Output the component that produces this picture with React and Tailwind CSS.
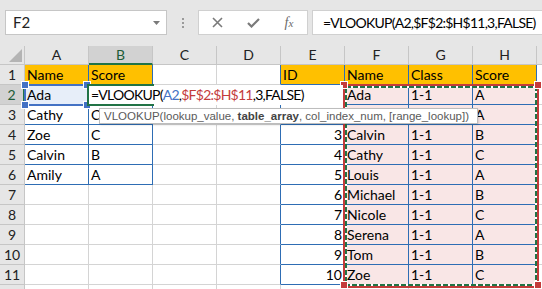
import React from "react";

const COLS = ["A", "B", "C", "D", "E", "F", "G", "H"];

const CELLS = {
  A1: "Name", B1: "Score",
  A2: "Ada",
  A3: "Cathy", B3: "C",
  A4: "Zoe", B4: "C",
  A5: "Calvin", B5: "B",
  A6: "Amily", B6: "A",
  E1: "ID", F1: "Name", G1: "Class", H1: "Score",
  F2: "Ada", G2: "1-1", H2: "A", H3: "A",
};

const NAMES = ["Calvin", "Cathy", "Louis", "Michael", "Nicole", "Serena", "Tom", "Zoe"];
const SCORES = ["B", "C", "A", "B", "C", "A", "B", "C"];
NAMES.forEach((name, i) => {
  const r = i + 4;
  CELLS["E" + r] = String(i + 3);
  CELLS["F" + r] = name;
  CELLS["G" + r] = "1-1";
  CELLS["H" + r] = SCORES[i];
});

const inTableA = (c, r) => (c === "A" || c === "B") && r >= 1 && r <= 6;
const inTableE = (c, r) => ["E", "F", "G", "H"].includes(c) && r >= 1 && r <= 11;

function cellClass(c, r) {
  const table = inTableA(c, r) || inTableE(c, r);
  let cls = "border-r border-b box-border overflow-hidden whitespace-nowrap px-[2px] leading-[19px] ";
  if (table) cls += "border-[#2e6db4] ";
  else if (c === "D" && r <= 11) cls += "border-r-[#2e6db4] border-b-[#d4d4d4] ";
  else cls += "border-[#d4d4d4] ";
  if (table && r === 1) cls += "bg-[#ffc000] ";
  else if (c === "A" && r === 2) cls += "bg-[#e7eef9] ";
  else if (["F", "G", "H"].includes(c) && r >= 2 && r <= 11) cls += "bg-[#f9e6e6] ";
  else cls += "bg-white ";
  if (c === "E" && r > 1) cls += "text-right ";
  return cls;
}

function TopBar() {
  return (
    <div className="h-[46px] bg-[#e6e6e6] flex items-start pt-[10px] pl-[5px]">
      <div className="shrink-0 w-[162px] h-[25px] bg-white border border-[#c6c6c6] flex items-center justify-between pl-[7px] pr-[6px]">
        <span className="text-[15px] text-[#222]">F2</span>
        <svg width="7" height="4" viewBox="0 0 7 4">
          <polygon points="0,0 7,0 3.5,4" fill="#7a7a7a" />
        </svg>
      </div>
      <div className="shrink-0 w-[31px] h-[25px] flex flex-col items-center justify-center gap-[2px]">
        <div className="w-[2px] h-[2px] bg-[#9a9a9a]" />
        <div className="w-[2px] h-[2px] bg-[#9a9a9a]" />
        <div className="w-[2px] h-[2px] bg-[#9a9a9a]" />
      </div>
      <div className="shrink-0 w-[110px] h-[25px] bg-white border border-[#d0d0d0] flex items-center">
        <div className="w-[36px] flex justify-center">
          <svg width="11" height="11" viewBox="0 0 11 11">
            <path d="M1 1 L10 10 M10 1 L1 10" stroke="#7a7a7a" strokeWidth="1.6" />
          </svg>
        </div>
        <div className="w-[36px] flex justify-center">
          <svg width="13" height="10" viewBox="0 0 13 10">
            <path d="M1 5 L4.5 8.5 L12 1" stroke="#7a7a7a" strokeWidth="2.2" fill="none" />
          </svg>
        </div>
        <div className="w-[36px] flex justify-center">
          <span className="italic text-[14px] text-[#6a6a6a]" style={{ fontFamily: '"Liberation Serif", serif' }}>
            f<span className="text-[11px]">x</span>
          </span>
        </div>
      </div>
      <div className="ml-[4px] flex-1 min-w-0 -mr-px h-[25px] bg-white border border-[#d0d0d0] flex items-center pl-[10px] overflow-hidden">
        <span className="text-[14px] tracking-[-0.75px] text-black whitespace-nowrap">=VLOOKUP(A2,$F$2:$H$11,3,FALSE)</span>
      </div>
    </div>
  );
}

function Handle({ className }) {
  return <div className={"absolute w-[6px] h-[6px] border border-white box-content " + className} />;
}

export default function App() {
  const rows = Array.from({ length: 12 }, (_, i) => i + 1);
  return (
    <div className="w-[542px] h-[289px] overflow-hidden bg-white text-[14px] text-black" style={{ fontFamily: "Lato, Carlito, sans-serif" }}>
      <TopBar />
      <div className="relative">
        <div className="grid grid-cols-[25px_repeat(8,64px)_1fr] grid-rows-[19px_repeat(12,20px)]">
          <div className="bg-[#e6e6e6] border-r border-b border-[#c6c6c6] flex items-end justify-end pr-[2px] pb-[2px]">
            <svg width="13" height="13" viewBox="0 0 13 13">
              <polygon points="13,0 13,13 0,13" fill="#b4b4b4" />
            </svg>
          </div>
          {COLS.map((c) => (
            <div
              key={c}
              className={
                c === "B"
                  ? "bg-[#d2d2d2] border-r border-[#c6c6c6] border-b-2 border-b-[#217346] text-[#1d5c38] text-center leading-[18px]"
                  : "bg-[#e6e6e6] border-r border-b border-[#c6c6c6] text-center leading-[18px] text-[#222]"
              }
            >
              {c}
            </div>
          ))}
          <div className="bg-[#e6e6e6] border-b border-[#c6c6c6]" />
          {rows.map((r) => (
            <React.Fragment key={r}>
              <div
                className={
                  r === 2
                    ? "bg-[#d2d2d2] border-r-2 border-r-[#217346] border-b border-b-[#c6c6c6] text-center leading-[19px] text-[#1d5c38]"
                    : "bg-[#e6e6e6] border-r border-b border-[#c6c6c6] text-center leading-[19px] text-[#222]"
                }
              >
                {r < 12 ? r : ""}
              </div>
              {COLS.map((c) => (
                <div key={c + r} className={cellClass(c, r)}>
                  {CELLS[c + r] || ""}
                </div>
              ))}
              <div className="border-b border-[#d4d4d4] bg-white" />
            </React.Fragment>
          ))}
        </div>

        {/* A2 reference selection */}
        <div className="absolute left-[24px] top-[38px] w-[66px] h-[22px] border-2 border-[#4472c4]" />
        <Handle className="bg-[#4472c4] left-[21px] top-[35px]" />
        <Handle className="bg-[#4472c4] left-[83px] top-[35px]" />
        <Handle className="bg-[#4472c4] left-[21px] top-[55px]" />
        <Handle className="bg-[#4472c4] left-[83px] top-[55px]" />

        {/* F2:H11 reference range */}
        <div className="absolute left-[343px] top-[38px] w-[196px] h-[204px] border-2 border-[#c43b3b]">
          <svg className="absolute inset-0" width="192" height="200">
            <rect x="1" y="1" width="190" height="198" fill="none" stroke="white" strokeWidth="2" />
            <rect x="1" y="1" width="190" height="198" fill="none" stroke="#217346" strokeWidth="2" strokeDasharray="5 2" />
          </svg>
        </div>
        <Handle className="bg-[#c43b3b] left-[340px] top-[35px]" />
        <Handle className="bg-[#c43b3b] left-[534px] top-[35px]" />
        <Handle className="bg-[#c43b3b] left-[340px] top-[235px]" />
        <Handle className="bg-[#c43b3b] left-[534px] top-[235px]" />

        {/* B2 in-cell editor */}
        <div className="absolute left-[89px] top-[39px] w-[254px] h-[20px] bg-white px-[2px] leading-[19px] whitespace-nowrap tracking-[-0.75px]">
          =VLOOKUP(<span className="text-[#4472c4]">A2</span>,<span className="text-[#c43b3b]">$F$2:$H$11</span>,3,FALSE)
        </div>
        <div className="absolute left-[87px] top-[38px] w-[67px] h-[22px] border-2 border-r-0 border-[#217346]" />

        {/* function tooltip */}
        <div
          className="absolute left-[99px] top-[62px] w-[379px] h-[16px] bg-white border border-[#bdbdbd] shadow-[1px_1px_2px_rgba(0,0,0,0.15)] pl-[4px] text-[11.5px] leading-[14px] text-[#5a5a5a] whitespace-nowrap"
          style={{ fontFamily: '"Liberation Sans", Arial, sans-serif' }}
        >
          VLOOKUP(lookup_value, <span className="font-bold text-[#444]">table_array</span>, col_index_num, [range_lookup])
        </div>
      </div>
    </div>
  );
}
